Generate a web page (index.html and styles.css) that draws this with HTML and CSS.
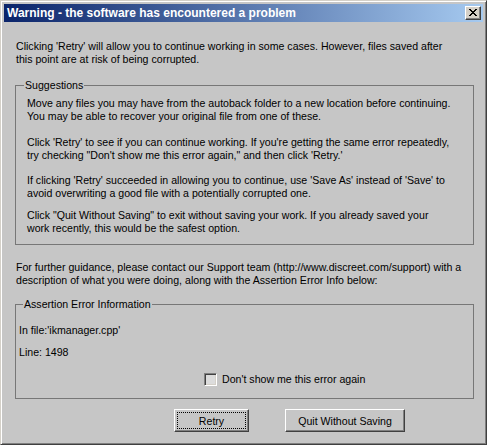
FILE: index.html
```html
<!DOCTYPE html>
<html>
<head>
    <title>Warning</title>
    <meta charset="UTF-8">
    <link rel="stylesheet" href="styles.css">
</head>
<body>
    <div class="window">
        <div class="titlebar">
            <span class="title">Warning - the software has encountered a problem</span>
            <button class="close" title="Close">
                <svg width="8" height="7" viewBox="0 0 8 7">
                    <path d="M0 0h2v1h1v1h2v-1h1v-1h2v1h-1v1h-1v1h-1v1h1v1h1v1h1v1h-2v-1h-1v-1h-2v1h-1v1h-2v-1h1v-1h1v-1h1v-1h-1v-1h-1v-1h-1z" fill="#000"/>
                </svg>
            </button>
        </div>

        <div class="content">
            <p class="intro">Clicking 'Retry' will allow you to continue working in some cases. However, files saved after<br>this point are at risk of being corrupted.</p>

            <fieldset class="group suggestions">
                <legend>Suggestions</legend>
                <p class="tip-1">Move any files you may have from the autoback folder to a new location before continuing.<br>You may be able to recover your original file from one of these.</p>
                <p class="tip-2">Click 'Retry' to see if you can continue working. If you're getting the same error repeatedly,<br>try checking "Don't show me this error again," and then click 'Retry.'</p>
                <p class="tip-3">If clicking 'Retry' succeeded in allowing you to continue, use 'Save As' instead of 'Save' to<br>avoid overwriting a good file with a potentially corrupted one.</p>
                <p>Click "Quit Without Saving" to exit without saving your work. If you already saved your<br>work recently, this would be the safest option.</p>
            </fieldset>

            <p class="guidance">For further guidance, please contact our Support team (http://www.discreet.com/support) with a<br>description of what you were doing, along with the Assertion Error Info below:</p>

            <fieldset class="group assertion">
                <legend>Assertion Error Information</legend>
                <p class="file">In file:'ikmanager.cpp'</p>
                <p class="line">Line: 1498</p>
                <label class="check">
                    <input type="checkbox" id="dont_show">
                    <span>Don't show me this error again</span>
                </label>
            </fieldset>

            <div class="buttons">
                <button class="btn retry">Retry</button>
                <button class="btn quit">Quit Without Saving</button>
            </div>
        </div>
    </div>
</body>
</html>
```

FILE: styles.css
```css
* {
    box-sizing: border-box;
    margin: 0;
    padding: 0;
}

html, body {
    width: 487px;
    height: 445px;
    overflow: hidden;
}

body {
    font-family: "Liberation Sans", Arial, sans-serif;
    font-size: 10.6px;
    line-height: 13px;
    color: #000;
    background: #d4d0c8;
}

.window {
    width: 487px;
    height: 445px;
    padding: 3px;
    background: #c6c6c6;
    border: 1px solid;
    border-color: #d4d0c8 #404040 #404040 #d4d0c8;
    box-shadow: inset 1px 1px #fff, inset -1px -1px #808080;
    display: flex;
    flex-direction: column;
}

.titlebar {
    height: 18px;
    display: flex;
    align-items: center;
    justify-content: space-between;
    padding: 0 2px 0 3px;
    background: linear-gradient(to right, #0a246a, #a6caf0);
}

.title {
    color: #fff;
    font-weight: 700;
    font-size: 12px;
    line-height: 18px;
    white-space: nowrap;
}

.close {
    width: 16px;
    height: 14px;
    display: flex;
    align-items: center;
    justify-content: center;
    background: #d4d0c8;
    border: 1px solid;
    border-color: #fff #404040 #404040 #fff;
    box-shadow: inset -1px -1px #808080;
    padding-bottom: 1px;
}

.content {
    flex: 1;
    padding: 18px 9px 0 11px;
}

.intro,
.guidance {
    margin-left: 1px;
}

.group {
    width: 459px;
    border: 1px solid #777;
}

.group legend {
    padding: 0 1px;
}

.suggestions {
    margin-top: 13px;
    padding: 5px 8px 9px 11px;
}

.suggestions legend {
    margin-left: -3px;
}

.tip-1 {
    margin-bottom: 13px;
}

.tip-2 {
    margin-bottom: 12px;
}

.tip-3 {
    margin-bottom: 9px;
}

.guidance {
    margin-top: 16px;
}

.assertion {
    margin-top: 11px;
    padding: 13px 8px 12px 3px;
}

.assertion legend {
    margin-left: 4px;
}

.line {
    margin-top: 9px;
}

.check {
    display: flex;
    align-items: center;
    gap: 5px;
    margin: 14px 0 0 185px;
}

.check input {
    appearance: none;
    width: 13px;
    height: 13px;
    background: #dcdcdc;
    border: 1px solid;
    border-color: #808080 #fff #fff #808080;
    box-shadow: inset 1px 1px #404040, inset -1px -1px #d4d0c8;
}

.buttons {
    display: flex;
    margin-top: 10px;
}

.btn {
    height: 23px;
    font-family: inherit;
    font-size: inherit;
    color: #000;
    background: #c6c6c6;
    border: 1px solid;
    border-color: #fff #404040 #404040 #fff;
    box-shadow: inset -1px -1px #808080;
}

.retry {
    width: 75px;
    margin-left: 159px;
    outline: 1px dotted #000;
    outline-offset: -4px;
}

.quit {
    width: 120px;
    margin-left: 36px;
}
```
